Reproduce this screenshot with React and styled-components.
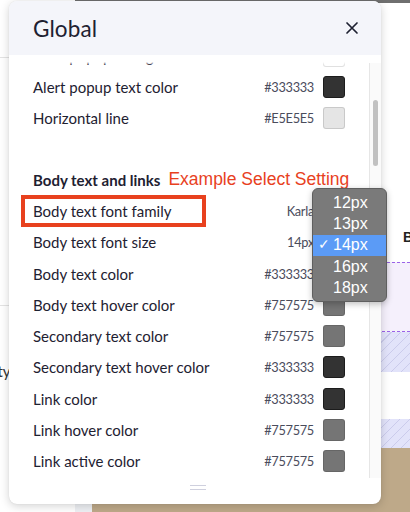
import React from 'react'
import styled, { createGlobalStyle } from 'styled-components'

const GlobalStyle = createGlobalStyle`
  html, body { margin: 0; padding: 0; }
  body {
    width: 410px;
    height: 512px;
    overflow: hidden;
    background: #fff;
    font-family: Lato, "Open Sans", sans-serif;
  }
`

// page behind the settings dialog
let Page = styled.div`
  position: relative;
  width: 410px;
  height: 512px;
  overflow: hidden;
  display: grid;
  grid-template-columns: 75px 17px 1fr;
  grid-template-rows: 3px 1fr;
  background: #fff;
`
let TopStrip = styled.div`
  grid-column: 2 / 4;
  background: #6f6f6f;
`
let TopGap = styled.div`
  grid-column: 1;
  grid-row: 1;
`
let Sidebar = styled.div`
  grid-column: 1;
  grid-row: 2;
  display: flex;
  flex-direction: column;
  overflow: hidden;
`
let SideRule = styled.div`
  height: 1px;
  background: #e3e3e3;
  margin-top: ${p => p.$top}px;
`
let SideLabel = styled.div`
  margin-top: 56px;
  font-size: 15px;
  color: #333;
  text-indent: -41px;
  white-space: nowrap;
`
let Gutter = styled.div`
  grid-column: 2;
  grid-row: 2;
  background: #eef0f4;
`
let Preview = styled.div`
  grid-column: 3;
  grid-row: 2;
  display: flex;
  flex-direction: column;
  overflow: hidden;
`
let PreviewBlank = styled.div`
  height: ${p => p.$h}px;
  flex: none;
  display: flex;
  align-items: flex-end;
  padding-left: 311px;
`
let PreviewHeading = styled.div`
  font-family: "Liberation Sans", sans-serif;
  font-weight: bold;
  font-size: 14px;
  color: #222;
  white-space: nowrap;
  margin-bottom: 17px;
`
let Outlined = styled.div`
  height: 68px;
  flex: none;
  background: #f5f0fc;
  border-top: 1px dashed #9a63e8;
  border-bottom: 1px dashed #9a63e8;
`
let Hatched = styled.div`
  height: ${p => p.$h}px;
  flex: none;
  background-color: #e2e3fa;
  background-image: repeating-linear-gradient(
    -45deg,
    transparent 0 6px,
    rgba(160, 160, 210, 0.35) 6px 7px
  );
`
let Tan = styled.div`
  flex: 1;
  background: #bea989;
`

// dialog
let Panel = styled.div`
  position: absolute;
  left: 9px;
  top: 1px;
  width: 372px;
  height: 503px;
  background: #fff;
  border-radius: 8px;
  box-shadow: 0 2px 10px rgba(0, 0, 0, 0.18), 0 0 1px rgba(0, 0, 0, 0.15);
  display: flex;
  flex-direction: column;
  overflow: hidden;
`
let Header = styled.div`
  height: 54px;
  flex: none;
  background: #f4f5fa;
  display: flex;
  align-items: center;
  justify-content: space-between;
  padding: 0 22px 0 24px;
`
let Title = styled.div`
  font-size: 22.5px;
  color: #1e2131;
  letter-spacing: 0.1px;
`
let Close = styled.button`
  border: 0;
  background: none;
  padding: 0;
  width: 14px;
  height: 14px;
  display: flex;
`
let Body = styled.div`
  flex: 1;
  display: flex;
  min-height: 0;
`
let List = styled.div`
  flex: 1;
  overflow: hidden;
  padding: 0 24px;
  display: flex;
  flex-direction: column;
  position: relative;
`
let Fade = styled.div`
  position: absolute;
  left: 0;
  right: 0;
  top: 0;
  height: 10px;
  background: linear-gradient(#fff 0 7px, rgba(255, 255, 255, 0));
`
let Scroll = styled.div`
  margin-top: -15px;
  display: flex;
  flex-direction: column;
`
let Row = styled.div`
  height: 31.25px;
  flex: none;
  display: flex;
  align-items: center;
  gap: 9px;
  white-space: nowrap;
  margin-top: ${p => (p.$gap ? '30.6px' : '0')};
`
let Label = styled.div`
  flex: 1;
  font-size: 15px;
  color: #1e2131;
  ${p =>
    p.$boxed &&
    `
    flex: none;
    width: 185px;
    height: 32px;
    box-sizing: border-box;
    margin-left: -12px;
    padding-left: 8px;
    border: 4px solid #e8411e;
    display: flex;
    align-items: center;
    margin-right: auto;
  `}
`
let SectionTitle = styled.div`
  font-size: 15px;
  font-weight: bold;
  color: #1e2131;
`
let Note = styled.div`
  font-family: "Liberation Sans", sans-serif;
  font-size: 17.5px;
  color: #e8411e;
  margin-left: -1px;
`
let Value = styled.div`
  font-size: 12.8px;
  letter-spacing: -0.3px;
  color: #4a4c5c;
  ${p => p.$plain && 'margin-right: 31px;'}
`
let Swatch = styled.div`
  width: 22px;
  height: 22px;
  box-sizing: border-box;
  border-radius: 3px;
  background: ${p => p.$color};
  border: 1px solid ${p => (p.$color === '#333333' ? '#1c1c1c' : 'rgba(0,0,0,0.12)')};
`
let Grip = styled.div`
  position: absolute;
  left: 50%;
  bottom: 14px;
  width: 16px;
  height: 5px;
  margin-left: 1px;
  border-top: 1.5px solid #cfd0de;
  border-bottom: 1.5px solid #cfd0de;
  box-sizing: border-box;
`
let Track = styled.div`
  width: 12px;
  flex: none;
  margin: 8px 0 26px;
  background: #fafafa;
  border-left: 1px solid #e6e6e6;
  box-sizing: border-box;
  padding: 37px 0 0 3px;
`
let Thumb = styled.div`
  width: 5px;
  height: 66px;
  border-radius: 3px;
  background: #c1c1c1;
`

// native select popup
let Menu = styled.div`
  position: absolute;
  left: 312px;
  top: 188px;
  width: 75px;
  height: 114px;
  box-sizing: border-box;
  padding-top: 3px;
  background: #7a7a7a;
  border: 1px solid #5f5f5f;
  border-radius: 6px;
  box-shadow: 0 2px 6px rgba(0, 0, 0, 0.25);
  font-family: "Liberation Sans", sans-serif;
`
let Option = styled.div`
  height: 21.3px;
  display: flex;
  align-items: center;
  padding-left: 20px;
  position: relative;
  font-size: 16px;
  color: #fff;
  background: ${p => (p.$active ? '#5b9bf6' : 'transparent')};
`
let Check = styled.span`
  position: absolute;
  left: 5px;
  top: 1px;
  font-size: 14px;
`

const topRows = [
  { label: 'Alert popup background', hex: '#FFFFFF', color: '#ffffff' },
  { label: 'Alert popup text color', hex: '#333333', color: '#333333' },
  { label: 'Horizontal line', hex: '#E5E5E5', color: '#e5e5e5' },
]

const bodyRows = [
  { label: 'Body text color', hex: '#333333', color: '#333333' },
  { label: 'Body text hover color', hex: '#757575', color: '#757575' },
  { label: 'Secondary text color', hex: '#757575', color: '#757575' },
  { label: 'Secondary text hover color', hex: '#333333', color: '#333333' },
  { label: 'Link color', hex: '#333333', color: '#333333' },
  { label: 'Link hover color', hex: '#757575', color: '#757575' },
  { label: 'Link active color', hex: '#757575', color: '#757575' },
]

const sizes = ['12px', '13px', '14px', '16px', '18px']

function ColorRow({ label, hex, color }) {
  return (
    <Row>
      <Label>{label}</Label>
      <Value>{hex}</Value>
      <Swatch $color={color} />
    </Row>
  )
}

export default function App() {
  return (
    <Page>
      <GlobalStyle />
      <TopGap />
      <TopStrip />
      <Sidebar>
        <SideRule $top={54} />
        <SideRule $top={247} />
        <SideLabel>Opacity</SideLabel>
      </Sidebar>
      <Gutter />
      <Preview>
        <PreviewBlank $h={259}>
          <PreviewHeading>Body</PreviewHeading>
        </PreviewBlank>
        <Outlined />
        <Hatched $h={40} />
        <PreviewBlank $h={47} />
        <Hatched $h={29} />
        <Tan />
      </Preview>

      <Panel>
        <Header>
          <Title>Global</Title>
          <Close aria-label="Close">
            <svg width="14" height="14" viewBox="0 0 14 14">
              <path d="M2 2 L12 12 M12 2 L2 12" stroke="#1e2131" strokeWidth="1.7" strokeLinecap="round" />
            </svg>
          </Close>
        </Header>
        <Body>
          <List>
            <Scroll>
              {topRows.map(r => (
                <ColorRow key={r.label} {...r} />
              ))}
              <Row $gap>
                <SectionTitle>Body text and links</SectionTitle>
                <Note>Example Select Setting</Note>
              </Row>
              <Row>
                <Label $boxed>Body text font family</Label>
                <Value $plain>Karla</Value>
              </Row>
              <Row>
                <Label>Body text font size</Label>
                <Value $plain>14px</Value>
              </Row>
              {bodyRows.map(r => (
                <ColorRow key={r.label} {...r} />
              ))}
            </Scroll>
            <Fade />
            <Grip />
          </List>
          <Track>
            <Thumb />
          </Track>
        </Body>
      </Panel>

      <Menu>
        {sizes.map(s => (
          <Option key={s} $active={s === '14px'}>
            {s === '14px' && <Check>✓</Check>}
            {s}
          </Option>
        ))}
      </Menu>
    </Page>
  )
}
